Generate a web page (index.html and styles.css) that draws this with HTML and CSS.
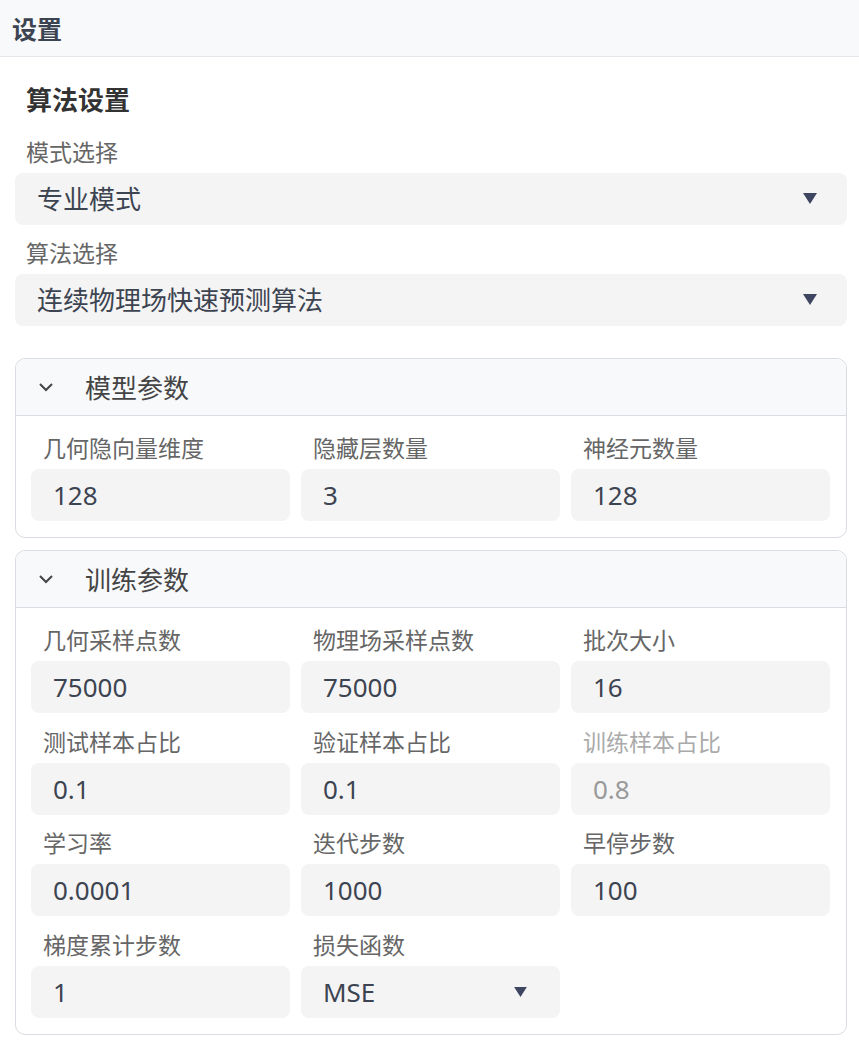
FILE: index.html
```html
<!DOCTYPE html>
<html lang="zh-CN">
<head>
<meta charset="UTF-8" />
<meta name="viewport" content="width=device-width, initial-scale=1" />
<title>设置</title>
<link rel="stylesheet" href="styles.css">
</head>
<body>

<header class="top-bar">设置</header>

<main class="content">
  <h2 class="section-title">算法设置</h2>

  <div class="stack">
    <label class="field">
      <span class="field-label">模式选择</span>
      <span class="select-wrap">
        <select class="select">
          <option>专业模式</option>
          <option>简易模式</option>
        </select>
        <svg class="caret" viewBox="0 0 14 11"><path d="M0 0h14L7 11z"/></svg>
      </span>
    </label>
    <label class="field">
      <span class="field-label">算法选择</span>
      <span class="select-wrap">
        <select class="select">
          <option>连续物理场快速预测算法</option>
        </select>
        <svg class="caret" viewBox="0 0 14 11"><path d="M0 0h14L7 11z"/></svg>
      </span>
    </label>
  </div>

  <section class="panel panel-model">
    <div class="panel-head">
      <svg class="chevron" viewBox="0 0 16 10"><polyline points="2,2 8,8 14,2"/></svg>
      <span>模型参数</span>
    </div>
    <div class="panel-body">
      <label class="field">
        <span class="field-label">几何隐向量维度</span>
        <input class="input" type="text" value="128">
      </label>
      <label class="field">
        <span class="field-label">隐藏层数量</span>
        <input class="input" type="text" value="3">
      </label>
      <label class="field">
        <span class="field-label">神经元数量</span>
        <input class="input" type="text" value="128">
      </label>
    </div>
  </section>

  <section class="panel">
    <div class="panel-head">
      <svg class="chevron" viewBox="0 0 16 10"><polyline points="2,2 8,8 14,2"/></svg>
      <span>训练参数</span>
    </div>
    <div class="panel-body">
      <label class="field">
        <span class="field-label">几何采样点数</span>
        <input class="input" type="text" value="75000">
      </label>
      <label class="field">
        <span class="field-label">物理场采样点数</span>
        <input class="input" type="text" value="75000">
      </label>
      <label class="field">
        <span class="field-label">批次大小</span>
        <input class="input" type="text" value="16">
      </label>

      <label class="field">
        <span class="field-label">测试样本占比</span>
        <input class="input" type="text" value="0.1">
      </label>
      <label class="field">
        <span class="field-label">验证样本占比</span>
        <input class="input" type="text" value="0.1">
      </label>
      <label class="field is-disabled">
        <span class="field-label">训练样本占比</span>
        <input class="input" type="text" value="0.8" disabled>
      </label>

      <label class="field">
        <span class="field-label">学习率</span>
        <input class="input" type="text" value="0.0001">
      </label>
      <label class="field">
        <span class="field-label">迭代步数</span>
        <input class="input" type="text" value="1000">
      </label>
      <label class="field">
        <span class="field-label">早停步数</span>
        <input class="input" type="text" value="100">
      </label>

      <label class="field">
        <span class="field-label">梯度累计步数</span>
        <input class="input" type="text" value="1">
      </label>
      <label class="field">
        <span class="field-label">损失函数</span>
        <span class="select-wrap">
          <select class="select">
            <option>MSE</option>
            <option>MAE</option>
          </select>
          <svg class="caret caret-sm" viewBox="0 0 14 11"><path d="M0 0h14L7 11z"/></svg>
        </span>
      </label>
    </div>
  </section>
</main>

</body>
</html>
```

FILE: styles.css
```css
* { box-sizing: border-box; margin: 0; padding: 0; }
body {
  font-family: "Noto Sans", "Noto Sans CJK SC", sans-serif;
  background: #fff;
  color: #333;
}

.top-bar {
  height: 57px;
  padding: 0 12px;
  display: flex;
  align-items: center;
  background: #f8f9fb;
  border-bottom: 1px solid #e4e6eb;
  font-size: 25px;
  font-weight: 700;
  color: #3d4451;
}

.content {
  padding: 25px 12px 10px 15px;
}
.section-title {
  font-size: 26px;
  font-weight: 700;
  line-height: 36px;
  color: #333;
  padding-left: 11px;
  margin-bottom: 19px;
}
.stack {
  display: flex;
  flex-direction: column;
  gap: 13px;
}
.stack .field-label { padding-left: 11px; }

/* label + control */
.field {
  display: flex;
  flex-direction: column;
  gap: 6px;
}
.field-label {
  font-size: 23px;
  line-height: 30px;
  color: #666;
}
.input, .select {
  width: 100%;
  height: 52px;
  border: none;
  outline: none;
  border-radius: 8px;
  background: #f4f4f5;
  padding: 0 22px;
  font-family: inherit;
  font-size: 26px;
  color: #3d4451;
}
.is-disabled .field-label { color: #aaa; }
.is-disabled .input { color: #999; background: #f5f5f6; }

.select-wrap {
  position: relative;
  display: block;
}
.select {
  appearance: none;
  -webkit-appearance: none;
  padding-right: 60px;
  cursor: pointer;
}
.caret {
  position: absolute;
  right: 30px;
  top: 20px;
  width: 14px;
  height: 11px;
  fill: #3d4560;
  pointer-events: none;
}
.caret-sm { right: 33px; top: 21px; width: 13px; height: 10px; }

/* collapsible parameter groups */
.panel {
  margin-top: 12px;
  border: 1px solid #d9dce3;
  border-radius: 10px;
  overflow: hidden;
}
.panel-model { margin-top: 32px; }
.panel-head {
  height: 57px;
  display: flex;
  align-items: center;
  gap: 31px;
  padding-left: 22px;
  background: #f8f9fb;
  border-bottom: 1px solid #d9dce3;
  font-size: 26px;
  color: #444;
}
.chevron {
  width: 16px;
  height: 10px;
  fill: none;
  stroke: #444;
  stroke-width: 2;
}
.panel-body {
  display: grid;
  grid-template-columns: repeat(3, 1fr);
  column-gap: 11px;
  row-gap: 13.5px;
  padding: 17px 16px 16px 15px;
}
.panel-body .field-label { padding-left: 12px; }
```
